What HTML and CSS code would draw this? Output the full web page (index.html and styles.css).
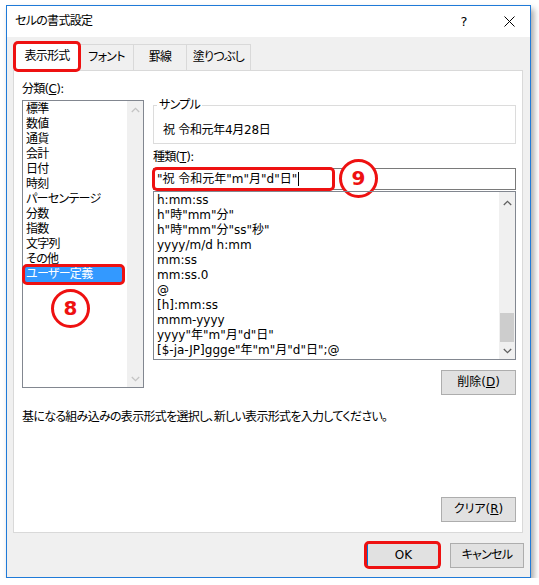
FILE: index.html
```html
<!DOCTYPE html>
<html lang="ja">
<head>
<meta charset="utf-8">
<title>セルの書式設定</title>
<link rel="stylesheet" href="styles.css">
</head>
<body>
<div class="window">
  <div class="titlebar">
    <span class="title jp">セルの書式設定</span>
    <span class="tb-btn help">?</span>
    <span class="tb-btn close">
      <svg width="11" height="11" viewBox="0 0 11 11"><path d="M0.5 0.5 L10.5 10.5 M10.5 0.5 L0.5 10.5" stroke="#000" stroke-width="1" fill="none"/></svg>
    </span>
  </div>
  <div class="tabs jp">
    <div class="tab active hl hl-tab">表示形式</div>
    <div class="tab t2">フォント</div>
    <div class="tab t3">罫線</div>
    <div class="tab t4">塗りつぶし</div>
  </div>
  <div class="panel">
    <div class="columns">
      <div class="left">
        <div class="label jp">分類(<u>C</u>):</div>
        <div class="listbox cat">
          <ul class="items jp">
            <li>標準</li>
            <li>数値</li>
            <li>通貨</li>
            <li>会計</li>
            <li>日付</li>
            <li>時刻</li>
            <li>パーセンテージ</li>
            <li>分数</li>
            <li>指数</li>
            <li>文字列</li>
            <li>その他</li>
            <li class="selected hl hl-item">ユーザー定義</li>
          </ul>
          <div class="scroll disabled">
            <span class="arrow"><svg width="9" height="6" viewBox="0 0 9 6"><path d="M0.8 5 L4.5 1.3 L8.2 5" stroke="currentColor" stroke-width="1.3" fill="none"/></svg></span>
            <span class="arrow"><svg width="9" height="6" viewBox="0 0 9 6"><path d="M0.8 1 L4.5 4.7 L8.2 1" stroke="currentColor" stroke-width="1.3" fill="none"/></svg></span>
          </div>
          <span class="badge b8">8</span>
        </div>
      </div>
      <div class="right">
        <fieldset class="sample">
          <legend class="jp">サンプル</legend>
          <div class="sample-text">祝 令和元年4月28日</div>
        </fieldset>
        <div class="label jp">種類(<u>T</u>):</div>
        <div class="input">"祝 令和元年"m"月"d"日"<span class="caret"></span><span class="hlbox"></span><span class="badge b9">9</span></div>
        <div class="listbox fmt">
          <ul class="items">
            <li>h:mm:ss</li>
            <li>h"時"mm"分"</li>
            <li>h"時"mm"分"ss"秒"</li>
            <li>yyyy/m/d h:mm</li>
            <li>mm:ss</li>
            <li>mm:ss.0</li>
            <li>@</li>
            <li>[h]:mm:ss</li>
            <li>mmm-yyyy</li>
            <li>yyyy"年"m"月"d"日"</li>
            <li>[$-ja-JP]ggge"年"m"月"d"日";@</li>
          </ul>
          <div class="scroll">
            <span class="arrow up"><svg width="9" height="6" viewBox="0 0 9 6"><path d="M0.8 5 L4.5 1.3 L8.2 5" stroke="currentColor" stroke-width="1.3" fill="none"/></svg></span>
            <span class="track"><span class="thumb"></span></span>
            <span class="arrow"><svg width="9" height="6" viewBox="0 0 9 6"><path d="M0.8 1 L4.5 4.7 L8.2 1" stroke="currentColor" stroke-width="1.3" fill="none"/></svg></span>
          </div>
        </div>
        <div class="btnrow delete-row"><button class="btn wide">削除(<u>D</u>)</button></div>
      </div>
    </div>
    <p class="desc jp">基になる組み込みの表示形式を選択し、新しい表示形式を入力してください。</p>
    <div class="btnrow clear-row"><button class="btn wide">クリア(<u>R</u>)</button></div>
  </div>
  <div class="footer">
    <button class="btn ok hl hl-ok">OK</button>
    <button class="btn cancel jp">キャンセル</button>
  </div>
</div>
</body>
</html>
```
FILE: styles.css
```css
body {
  margin: 0;
  background: #fff;
  font-family: "DejaVu Sans", "Noto Sans CJK JP", sans-serif;
  font-size: 12px;
  line-height: 15px;
  font-feature-settings: "palt";
  color: #000;
}

.jp { letter-spacing: -0.7px; }

.window {
  box-sizing: border-box;
  width: 525px;
  height: 573px;
  margin: 5px 0 0 6px;
  border: 1px solid #1f7ad8;
  background: #f0f0f0;
  box-shadow: 3px 4px 6px rgba(0, 0, 0, 0.35);
  display: flex;
  flex-direction: column;
}

.titlebar {
  height: 31px;
  background: #fff;
  display: flex;
  align-items: center;
  padding: 0 6px 0 8px;
}
.title { flex: 1; line-height: 31px; }
.tb-btn {
  width: 30px;
  height: 31px;
  display: flex;
  align-items: center;
  justify-content: center;
}
.help { font-size: 13px; }
.close { margin-left: 15px; }

.tabs {
  display: flex;
  align-items: flex-end;
  height: 28px;
  margin-top: 5px;
  padding-left: 7px;
  position: relative;
  z-index: 1;
}
.tab {
  box-sizing: border-box;
  height: 26px;
  border: 1px solid #d9d9d9;
  border-bottom: none;
  background: #f0f0f0;
  text-align: center;
  line-height: 24px;
  margin-left: -1px;
}
.tab.active {
  width: 66px;
  height: 29px;
  margin-left: 0;
  margin-bottom: -1px;
  background: #fff;
  line-height: 27px;
}
.t2 { width: 55px; }
.t3 { width: 54px; }
.t4 { width: 65px; }

.panel {
  box-sizing: border-box;
  margin: 0 7px 0 6px;
  border: 1px solid #d9d9d9;
  background: #fff;
  padding: 0 6px 10px 8px;
}
.columns { display: flex; gap: 9px; }
.left { width: 122px; }
.right { width: 363px; }

.label { line-height: 16px; }
.left .label { margin-top: 10px; }
.right .label { margin-top: 5px; }

.listbox {
  box-sizing: border-box;
  border: 1px solid #828790;
  display: flex;
  justify-content: space-between;
  position: relative;
}
.items { list-style: none; margin: 0; padding: 0; }
.items li { height: 15px; line-height: 15px; padding-left: 3px; white-space: nowrap; }
.cat { margin-top: 3px; height: 288px; }
.cat .items { width: 101px; padding-top: 1px; }
.cat .items li.selected { background: #3399ff; color: #fff; }

.scroll {
  width: 16px;
  background: #f0f0f0;
  display: flex;
  flex-direction: column;
  justify-content: space-between;
  align-items: center;
  color: #606060;
}
.scroll.disabled { color: #c4c4c4; }
.arrow {
  height: 17px;
  display: flex;
  align-items: center;
  justify-content: center;
}
.arrow svg { display: block; }
.arrow.up { height: 22px; }
.track { flex: 1; width: 100%; position: relative; }
.thumb {
  position: absolute;
  left: 1px;
  right: 1px;
  bottom: 0;
  height: 29px;
  background: #cdcdcd;
}

.sample {
  margin: 26px 0 0;
  padding: 9px 8px 5px 9px;
  border: 1px solid #dcdcdc;
  min-width: 0;
}
.sample legend {
  padding: 0 2px;
  margin-left: -6px;
  line-height: 16px;
}
.sample-text { line-height: 16px; letter-spacing: -0.3px; }

.input {
  position: relative;
  box-sizing: border-box;
  height: 22px;
  margin-top: 3px;
  border: 1px solid #7a7a7a;
  padding-left: 3px;
  line-height: 20px;
  white-space: nowrap;
}
.caret {
  display: inline-block;
  width: 1px;
  height: 14px;
  background: #000;
  vertical-align: -3px;
  margin-left: 1px;
}

.fmt { margin-top: 1px; height: 169px; }
.fmt .items { flex: 1; padding-top: 1px; overflow: hidden; }

.btnrow { display: flex; justify-content: flex-end; }
.delete-row { margin-top: 10px; }
.clear-row { margin-top: 72px; }

.btn {
  box-sizing: border-box;
  height: 25px;
  padding: 0;
  background: #e1e1e1;
  border: 1px solid #adadad;
  font: inherit;
  line-height: 23px;
  color: #000;
  position: relative;
}
.btn.wide { width: 75px; }

.desc {
  margin: 14px 0 0;
  line-height: 16px;
}

.footer {
  display: flex;
  justify-content: flex-end;
  gap: 10px;
  margin-top: 10px;
  padding-right: 6px;
}
.ok { width: 73px; border-color: #0078d7; }
.cancel { width: 74px; }

.hl { position: relative; }
.hl::after, .hlbox {
  content: "";
  position: absolute;
  box-sizing: border-box;
  border: 3px solid #ee1111;
  border-radius: 5px;
  pointer-events: none;
}
.hl-tab::after { left: -2px; top: -2px; width: 68px; height: 31px; }
.hl-item::after { left: -1px; top: -3px; width: 103px; height: 21px; }
.hl-ok::after { left: -4px; top: -3px; width: 77px; height: 28px; }
.hlbox { left: -2px; top: -2px; width: 183px; height: 24px; }

.badge {
  position: absolute;
  box-sizing: border-box;
  width: 39px;
  height: 39px;
  border: 3px solid #ee1111;
  border-radius: 50%;
  background: #fff;
  color: #ee1111;
  font-family: "DejaVu Sans", sans-serif;
  font-weight: bold;
  font-size: 20px;
  line-height: 33px;
  letter-spacing: 0;
  text-align: center;
}
.b8 { left: 28px; top: 188px; }
.b9 { left: 185px; top: -10px; }
```
